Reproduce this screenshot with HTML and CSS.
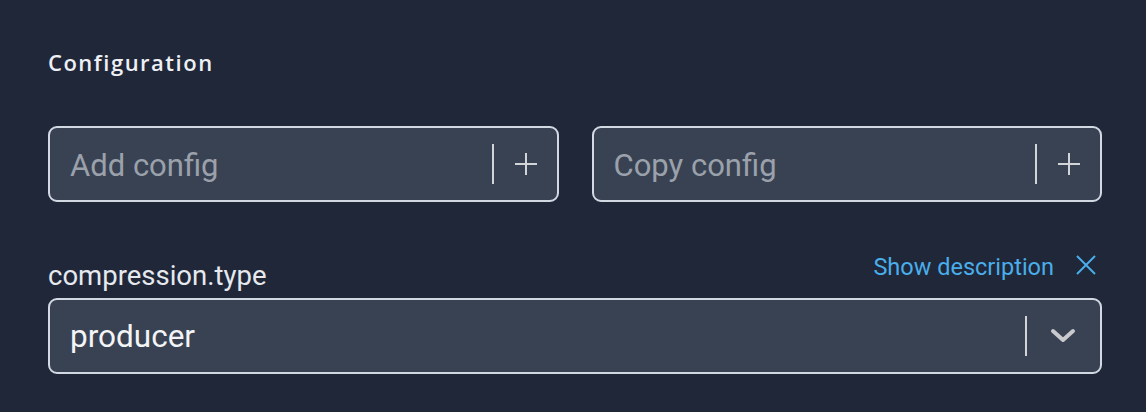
FILE: index.html
```html
<!DOCTYPE html>
<html>
<head>
<meta charset="utf-8">
<link rel="stylesheet" href="styles.css">
</head>
<body>
<div class="panel">
  <h2 class="title">Configuration</h2>
  <div class="inputs">
    <div class="field">
      <span class="placeholder">Add config</span>
      <span class="sep"></span>
      <svg class="plus" width="22" height="22" viewBox="0 0 22 22"><path d="M11 0V22M0 11H22" stroke="#d2d4d8" stroke-width="2"/></svg>
    </div>
    <div class="field">
      <span class="placeholder">Copy config</span>
      <span class="sep"></span>
      <svg class="plus" width="22" height="22" viewBox="0 0 22 22"><path d="M11 0V22M0 11H22" stroke="#d2d4d8" stroke-width="2"/></svg>
    </div>
  </div>
  <div class="label-row">
    <span class="label">compression.type</span>
    <div class="actions">
      <span class="link">Show description</span>
      <svg class="close" width="20" height="20" viewBox="0 0 20 20"><path d="M1 1L19 19M19 1L1 19" stroke="#4aaeea" stroke-width="2"/></svg>
    </div>
  </div>
  <div class="field select">
    <span class="value">producer</span>
    <span class="sep"></span>
    <svg class="chev" width="26" height="16" viewBox="0 0 26 16"><path d="M3 3L13 12L23 3" fill="none" stroke="#c9cacd" stroke-width="4" stroke-linecap="round" stroke-linejoin="round"/></svg>
  </div>
</div>
</body>
</html>
```
FILE: styles.css
```css
html, body {
  margin: 0;
  padding: 0;
  background: #1f2739;
}
body {
  font-family: Roboto, "Liberation Sans", sans-serif;
}
.panel {
  width: 1054px;
  padding: 46px 0 0 48px;
}
.title {
  margin: 0;
  font-family: "Open Sans", "Noto Sans", sans-serif;
  font-weight: 600;
  font-size: 22px;
  line-height: 32px;
  letter-spacing: 1.5px;
  color: #eef0f4;
}
.inputs {
  display: flex;
  gap: 33px;
  margin-top: 48px;
}
.field {
  box-sizing: border-box;
  flex: 1;
  height: 76px;
  background: #394253;
  border: 2px solid #d3d9e3;
  border-radius: 9px;
  display: flex;
  align-items: center;
  padding: 0 20px 0 20px;
}
.placeholder {
  flex: 1;
  font-size: 31px;
  line-height: 36px;
  margin-top: 3px;
  color: #9ba1ab;
}
.sep {
  width: 2px;
  height: 40px;
  background: #d3d4d7;
  margin-right: 21px;
}
.plus {
  display: block;
}
.label-row {
  display: flex;
  justify-content: space-between;
  align-items: flex-end;
  margin-top: 50px;
  height: 40px;
  margin-bottom: 6px;
}
.label {
  font-size: 27.5px;
  color: #e6e9ee;
  line-height: 32px;
}
.actions {
  display: flex;
  align-items: flex-start;
  gap: 22px;
  padding-right: 6px;
  margin-bottom: 13px;
}
.link {
  font-size: 23.5px;
  color: #4aaeea;
  line-height: 24px;
}
.close {
  display: block;
}
.select .value {
  flex: 1;
  font-size: 31.5px;
  line-height: 36px;
  margin-top: 2px;
  color: #f3f4f6;
}
.select .sep {
  margin-right: 23px;
}
.chev {
  display: block;
  margin-right: 4px;
}
```
